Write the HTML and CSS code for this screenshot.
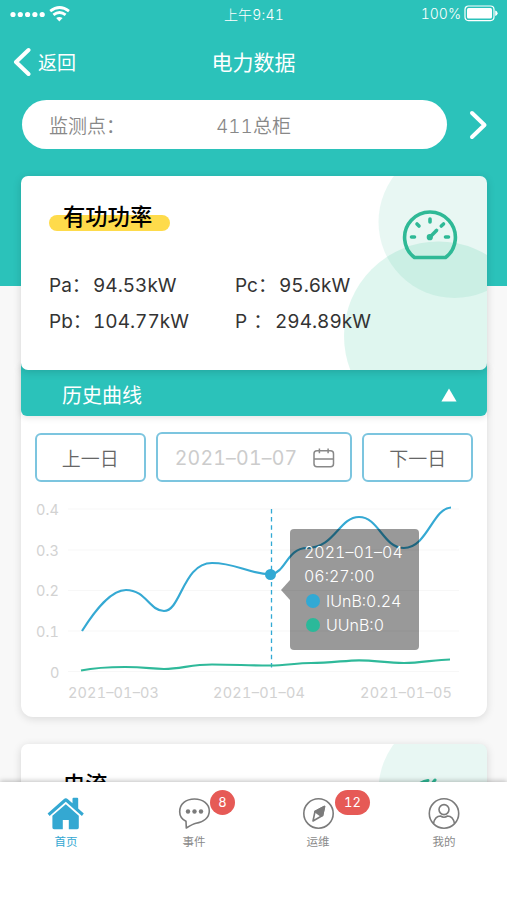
FILE: index.html
```html
<!DOCTYPE html>
<html lang="zh-CN">
<head>
  <meta charset="UTF-8">
  <meta name="viewport" content="width=device-width, initial-scale=1.0">
  <title>电力数据</title>
  <link rel="stylesheet" href="styles.css">
</head>
<body>
  <main class="content">
    <div class="status">
      <svg class="signal" width="62" height="18" viewBox="0 0 62 18">
        <g fill="#fff">
          <circle cx="3" cy="9.5" r="2.6"/>
          <circle cx="10.3" cy="9.5" r="2.6"/>
          <circle cx="17.6" cy="9.5" r="2.6"/>
          <circle cx="24.9" cy="9.5" r="2.6"/>
          <circle cx="32.2" cy="9.5" r="2.6"/>
          <path d="M46.2 13.1 Q49.3 10.9 52.6 13.1 L49.3 16.4 Z"/>
        </g>
        <g fill="none" stroke="#fff" stroke-width="2.8">
          <path d="M40.2 6.1 Q49.6 -1 59 6.1"/>
          <path d="M43.4 9.9 Q49.5 5 55.6 9.9"/>
        </g>
      </svg>
      <span class="time">上午9:41</span>
      <div class="battery">
        <span>100%</span>
        <svg width="34" height="17" viewBox="0 0 34 17">
          <rect x="1" y="1" width="29" height="14.6" rx="3.5" fill="none" stroke="#fff" stroke-width="1.2"/>
          <rect x="3" y="3" width="25" height="10.6" rx="1.5" fill="#fff"/>
          <path d="M31.2 5.6 Q33.6 6.3 33.6 8.3 T31.2 11 Z" fill="#fff"/>
        </svg>
      </div>
    </div>

    <header class="nav">
      <a class="back">
        <svg width="18" height="30" viewBox="0 0 18 30">
          <path d="M15.5 3 L3 15 L15.5 27" fill="none" stroke="#fff" stroke-width="4" stroke-linecap="round" stroke-linejoin="round"/>
        </svg>
        <span>返回</span>
      </a>
      <h1>电力数据</h1>
    </header>

    <div class="point">
      <div class="point-box">
        <span class="point-label">监测点：</span>
        <span class="point-name">411总柜</span>
      </div>
      <svg width="19" height="30" viewBox="0 0 19 30">
        <path d="M3 3 L15.5 15 L3 27" fill="none" stroke="#fff" stroke-width="4" stroke-linecap="round" stroke-linejoin="round"/>
      </svg>
    </div>

    <section class="card">
      <svg class="card-bg" width="150" height="194" viewBox="0 0 150 194">
        <circle cx="117.5" cy="46" r="76" fill="#2bb496" fill-opacity=".11"/>
        <circle cx="101.5" cy="160" r="94.5" fill="#28c193" fill-opacity=".15"/>
        <g transform="translate(-1 -.5)" fill="none" stroke="#2fb996" stroke-width="3.6" stroke-linecap="round" stroke-linejoin="round">
          <path d="M78.5 82 A25.4 25.4 0 1 1 109.5 82 Z"/>
          <path d="M94 43.5 V46.5 M81 48.5 L83 50.5 M107.5 48.5 L105.3 50.5 M75.5 61.5 H78.5 M109.5 61.5 H112.5"/>
          <path d="M94 61.5 L100.5 55"/>
          <circle cx="93.8" cy="61.7" r="1.3"/>
        </g>
      </svg>
      <h2 class="card-title"><span>有功功率</span></h2>
      <div class="values">
        <p><span class="key">Pa：</span><span>94.53kW</span></p>
        <p><span class="key">Pc：</span><span>95.6kW</span></p>
        <p><span class="key">Pb：</span><span>104.77kW</span></p>
        <p><span class="key wide">P<i>：</i></span><span>294.89kW</span></p>
      </div>
    </section>

    <section class="history">
      <div class="history-bar">
        <span>历史曲线</span>
        <svg width="16" height="14" viewBox="0 0 16 14"><path d="M8 0.5 L15.6 13.5 H0.4 Z" fill="#fff"/></svg>
      </div>
      <div class="days">
        <button class="day">上一日</button>
        <div class="date">
          <span>2021–01–07</span>
          <svg width="22" height="20" viewBox="0 0 22 20" fill="none" stroke="#888" stroke-width="1.5">
            <rect x="1" y="2.7" width="19.5" height="16" rx="3"/>
            <path d="M1 11 H20.5 M6.4 0.5 V5.2 M15.1 0.5 V5.2"/>
          </svg>
        </div>
        <button class="day">下一日</button>
      </div>
      <div class="chart">
        <svg width="466" height="226" viewBox="0 0 466 226">
          <g stroke="#f7f7f7" stroke-width="1.2">
            <path d="M47 19 H438 M47 60 H438 M47 100.5 H438 M47 141 H438 M47 181.5 H438"/>
          </g>
          <g class="axis">
            <text x="15" y="25" textLength="23">0.4</text>
            <text x="15" y="65.5" textLength="23">0.3</text>
            <text x="15" y="106" textLength="23">0.2</text>
            <text x="15" y="146.5" textLength="23">0.1</text>
            <text x="29" y="187.5">0</text>
            <text x="47" y="207.5" textLength="91">2021–01–03</text>
            <text x="192" y="207.5" textLength="92">2021–01–04</text>
            <text x="339" y="207.5" textLength="92">2021–01–05</text>
          </g>
          <path d="M250.5 19 V179" stroke="#31a9d4" stroke-width="1.3" stroke-dasharray="4.5 3.6"/>
          <path class="line" stroke="#35a9d3" d="M61 141 C75 119 90 100 105 100 C125 100 128 120.5 143 121 C160 121 162 73 191 73 C215 73 225 83 250 84.5 C265 82 266 58 286 58 C314 58 318 27 338 27 C358 27 362 58 383 58 C406 58 412 18 430 17.5"/>
          <path class="line" stroke="#2fb99a" d="M60 180.5 C75 177.5 90 177 104 177 C125 177 130 179 143 179 C160 179 170 174.5 191 174.5 C215 174.5 225 175.5 249 175.5 C265 175.5 275 173 290 173 C310 173 325 170.3 338 170.3 C355 170.3 365 173 383 173 C400 173 415 169.5 429 169.5"/>
          <circle cx="249.5" cy="84.5" r="5.5" fill="#31a9d4"/>
        </svg>
        <div class="tip">
          <div>2021–01–04</div>
          <div>06:27:00</div>
          <div><i class="dot blue"></i>IUnB:0.24</div>
          <div><i class="dot green"></i>UUnB:0</div>
        </div>
      </div>
    </section>

    <section class="card next">
      <svg class="card-bg" width="150" height="194" viewBox="0 0 150 194">
        <circle cx="117.5" cy="46" r="76" fill="#2bb496" fill-opacity=".11"/>
        <path d="M83 39.5 Q87 36.8 91 36.5 M96 38.5 L98 36" fill="none" stroke="#2fb996" stroke-width="3" stroke-linecap="round"/>
      </svg>
      <h2 class="card-title short"><span>电流</span></h2>
    </section>
  </main>

  <nav class="tabs">
    <a class="tab active">
      <svg width="38" height="34" viewBox="0 0 38 34" fill="#34a8d2">
        <path d="M25.5 1.7 Q25.5 0.7 26.5 0.7 H30.2 Q31.2 0.7 31.2 1.7 V11.5 L36.8 16.5 L34.9 18.9 L18.8 4.8 L2.6 18.9 L0.6 16.5 L16.7 2.2 Q18.8 0.4 20.9 2.2 L25.5 6.3 Z"/>
        <path d="M18.8 7.3 L31.8 18.7 V30.6 Q31.8 32.2 30.2 32.2 H21.8 V23 H15.8 V32.2 H7 Q5.4 32.2 5.4 30.6 V18.7 Z"/>
      </svg>
      <span>首页</span>
    </a>
    <a class="tab event">
      <svg width="34" height="34" viewBox="0 0 34 34" fill="none" stroke="#7b7b7b" stroke-width="1.6" stroke-linejoin="round">
        <path d="M9 24.3 C5 22.3 2.7 19 2.7 14.7 C2.7 7 9 2 17.5 2 C26 2 32.3 7.3 32.3 14 C32.3 20.5 26.5 25.5 19 26.2 C15.8 26.8 12.5 29 9.3 31 Z"/>
        <g fill="#7b7b7b" stroke="none"><circle cx="11" cy="14.5" r="2.2"/><circle cx="17.5" cy="14.5" r="2.2"/><circle cx="24" cy="14.5" r="2.2"/></g>
      </svg>
      <span>事件</span>
      <b class="badge">8</b>
    </a>
    <a class="tab">
      <svg width="34" height="34" viewBox="0 0 34 34" fill="none" stroke="#7b7b7b" stroke-width="1.6" stroke-linejoin="round">
        <circle cx="17.5" cy="16.5" r="14.7"/>
        <path d="M23.5 9.5 L14 14.5 L12 24 L21.5 18.5 Z"/>
        <path d="M23.5 9.5 L14 14.5 L19.8 18.8 L21.5 18.5 Z" fill="#7b7b7b"/>
      </svg>
      <span>运维</span>
      <b class="badge">12</b>
    </a>
    <a class="tab">
      <svg width="34" height="34" viewBox="0 0 34 34" fill="none" stroke="#7b7b7b" stroke-width="1.6">
        <circle cx="17" cy="16.5" r="14.7"/>
        <circle cx="17" cy="12.6" r="5"/>
        <path d="M6.5 26.5 C7.5 21.5 10 19 13.5 19 Q17 21.5 20.5 19 C24 19 26.5 21.5 27.5 26.5"/>
      </svg>
      <span>我的</span>
    </a>
  </nav>
</body>
</html>
```
FILE: styles.css
```css
* {
  box-sizing: border-box;
}

body {
  margin: 0;
  height: 900px;
  display: flex;
  flex-direction: column;
  overflow: hidden;
  font-family: Inter, "Noto Sans CJK SC", sans-serif;
  font-weight: 400;
  font-variant-numeric: tabular-nums;
}

svg {
  display: block;
  flex: none;
}

h1, h2, p {
  margin: 0;
}

i, b {
  font-style: normal;
  font-weight: 400;
}

.content {
  height: 782px;
  overflow: hidden;
  background: linear-gradient(#2bc2ba 286px, #f8f8f8 286px);
}

/* barra de estado */
.status {
  display: grid;
  grid-template-columns: 1fr auto 1fr;
  align-items: center;
  height: 27px;
  padding: 0 9px 0 10px;
  color: #fff;
  font-size: 14px;
  font-weight: 300;
}

.time {
  letter-spacing: 0.2px;
}

.battery {
  display: flex;
  justify-content: flex-end;
  align-items: center;
  gap: 3px;
}

.nav {
  display: grid;
  grid-template-columns: 1fr auto 1fr;
  align-items: center;
  height: 69px;
  padding: 0 13px;
  color: #fff;
}

.back {
  display: flex;
  align-items: center;
  gap: 7px;
  font-size: 19px;
}

.back span {
  margin-top: -1px;
}

.nav h1 {
  margin-top: -2px;
  font-size: 21px;
  font-weight: 400;
}

.point {
  display: flex;
  align-items: center;
  gap: 22px;
  padding: 4px 0 0 22px;
}

.point-box {
  display: flex;
  align-items: center;
  width: 425px;
  height: 49px;
  padding-left: 27px;
  border-radius: 25px;
  background: #fff;
  color: #888;
  font-size: 19px;
  font-weight: 350;
}

.point-label {
  width: 167px;
}

.card {
  position: relative;
  z-index: 1;
  width: 466px;
  height: 194px;
  margin: 27px 0 0 21px;
  padding: 25px 28px 0;
  border-radius: 7px;
  background: #fff;
  box-shadow: 0 2px 8px rgba(0, 0, 0, 0.15);
  overflow: hidden;
}

.card-bg {
  position: absolute;
  top: 0;
  right: 0;
}

.card-title {
  position: relative;
  width: 121px;
  height: 32px;
  padding-left: 14px;
  font-size: 22.3px;
  font-weight: 500;
  line-height: 32px;
  color: #000;
}

.card-title::before {
  content: "";
  position: absolute;
  left: 0;
  top: 14px;
  width: 100%;
  height: 16px;
  border-radius: 8px;
  background: #fedb4b;
}

.card-title span {
  position: relative;
}

.card-title.short {
  width: 76px;
}

.values {
  position: relative;
  display: grid;
  grid-template-columns: 186px 1fr;
  margin-top: 35px;
  font-size: 19px;
  line-height: 36px;
  color: #333;
}

.values p {
  display: flex;
}

.key {
  width: 44px;
}

.key.wide {
  width: 40px;
}

.key i {
  margin-left: 6px;
}

.history {
  width: 466px;
  height: 354px;
  margin: -7px 0 0 21px;
  border-radius: 7px 7px 12px 12px;
  background: #fff;
  box-shadow: 0 2px 8px rgba(0, 0, 0, 0.12);
}

.history-bar {
  display: flex;
  justify-content: space-between;
  align-items: center;
  height: 53px;
  padding: 10px 30px 0 41px;
  border-radius: 0 0 6px 6px;
  background: #2bc2ba;
  box-shadow: 0 2px 6px rgba(0, 0, 0, 0.1);
  color: #fff;
  font-size: 20px;
}

.days {
  display: flex;
  align-items: center;
  gap: 10px;
  padding: 16px 14px 0;
}

.day, .date {
  border: 2px solid #7cc5df;
  border-radius: 6px;
  background: #fff;
}

.day {
  width: 111px;
  height: 49px;
  padding: 0;
  color: #666;
  font-family: inherit;
  font-size: 19px;
  font-weight: 350;
}

.date {
  display: flex;
  align-items: center;
  justify-content: space-between;
  width: 197px;
  height: 50px;
  padding: 2px 15px 0 17px;
  color: #ccc;
  font-size: 19.5px;
  letter-spacing: 0.2px;
}

.chart {
  position: relative;
  margin-top: 8px;
}

.axis text {
  fill: #d2d2d2;
  font-size: 14.5px;
}

.line {
  fill: none;
  stroke-width: 2.2;
}

.tip {
  position: absolute;
  left: 269px;
  top: 39px;
  width: 129px;
  height: 121px;
  padding: 11px 14px;
  border-radius: 4px;
  background: rgba(0, 0, 0, 0.4);
  color: #fff;
  font-size: 16px;
  font-weight: 350;
  line-height: 24.4px;
}

.tip::before {
  content: "";
  position: absolute;
  left: -9px;
  top: 51px;
  border: solid transparent;
  border-width: 10px 9px 10px 0;
  border-right-color: rgba(0, 0, 0, 0.4);
}

.tip div {
  display: flex;
  align-items: center;
  white-space: nowrap;
}

.dot {
  width: 14px;
  height: 14px;
  margin: 0 6px 0 2px;
  border-radius: 50%;
}

.blue {
  background: #31a9d4;
}

.green {
  background: #2bb99a;
}

/* menu inferior */
.tabs {
  position: relative;
  z-index: 2;
  display: flex;
  height: 118px;
  padding: 15px 0 0 3px;
  background: #fff;
  box-shadow: 0 -1px 5px rgba(0, 0, 0, 0.25);
}

.tab {
  position: relative;
  width: 126px;
  display: flex;
  flex-direction: column;
  align-items: center;
  gap: 2px;
  color: #8a8a8a;
  font-size: 11.5px;
  line-height: 18px;
}

.tab.active {
  color: #34a8d2;
}

.tab.event {
  padding-left: 4px;
}

.badge {
  position: absolute;
  left: 80px;
  top: -7px;
  min-width: 25px;
  height: 25px;
  padding: 0 9px;
  border-radius: 13px;
  background: #e65a56;
  color: #fff;
  font-size: 13px;
  line-height: 25px;
}

.event .badge {
  left: 81px;
  padding: 0;
  text-align: center;
}
```
